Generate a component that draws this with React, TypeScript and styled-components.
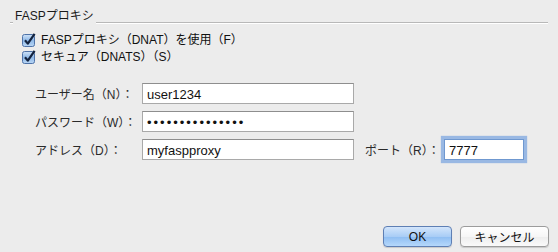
import React from 'react'
import styled, { createGlobalStyle } from 'styled-components'

const GlobalStyle = createGlobalStyle`
  html, body {
    margin: 0;
    padding: 0;
    background: #ececec;
  }
  body {
    font-family: "Liberation Sans", "Noto Sans CJK JP", sans-serif;
    font-size: 12px;
    color: #1a1a1a;
  }
`

const Dialog = styled.div`
  width: 558px;
  height: 252px;
  box-sizing: border-box;
  background: #ececec;
  display: flex;
  flex-direction: column;
  padding: 12px 9px 5px 10px;
`

const GroupHeader = styled.div`
  display: flex;
  align-items: flex-end;
  height: 12px;
  margin-right: 1px;
`

const Rule = styled.div<{ $grow?: boolean }>`
  flex: ${(p) => (p.$grow ? 1 : '0 0 3px')};
  height: 1px;
  background: #b8b8b8;
  border-bottom: 1px solid #fff;
`

const GroupTitle = styled.span`
  padding: 0 2px;
  line-height: 12px;
  font-size: 12px;
  transform: translateY(-2px);
`

const Checks = styled.div`
  display: flex;
  flex-direction: column;
  gap: 3px;
  padding: 9px 0 0 12px;
`

const CheckRow = styled.label`
  display: flex;
  align-items: center;
  gap: 5px;
  height: 14px;
  line-height: 14px;
  font-size: 12px;
  color: #111;
`

const Form = styled.div`
  display: grid;
  grid-template-columns: 107px 212px 90px 80px;
  grid-auto-rows: 21px;
  row-gap: 7px;
  align-items: center;
  padding: 19px 0 0 25px;
`

const FieldLabel = styled.span<{ $indent?: number }>`
  font-size: 12px;
  color: #2a2a2a;
  padding-left: ${(p) => p.$indent ?? 0}px;
  white-space: nowrap;
`

const TextField = styled.input<{ $focused?: boolean }>`
  box-sizing: border-box;
  width: 100%;
  height: 21px;
  margin: 0;
  padding: 1px 4px 0;
  border: 1px solid ${(p) => (p.$focused ? '#6f98d0' : '#a9a9a9')};
  border-top-color: ${(p) => (p.$focused ? '#6f98d0' : '#8e8e8e')};
  background: #fff;
  font-family: "Liberation Sans", "Noto Sans CJK JP", sans-serif;
  font-size: 13px;
  color: #111;
  outline: none;
  box-shadow: ${(p) => (p.$focused ? '0 0 1px 3px rgba(118, 163, 224, 0.7)' : 'none')};

  &[type='password'] {
    font-size: 13px;
    letter-spacing: 2px;
  }
`

const Spacer = styled.div`
  flex: 1;
`

const Buttons = styled.div`
  display: flex;
  justify-content: flex-end;
  gap: 8px;
`

const Button = styled.button<{ $primary?: boolean }>`
  height: 21px;
  width: ${(p) => (p.$primary ? '69px' : '89px')};
  margin: 0;
  padding: 0;
  border-radius: 4px;
  font-family: "Liberation Sans", "Noto Sans CJK JP", sans-serif;
  font-size: 12px;
  color: #111;
  border: 1px solid ${(p) => (p.$primary ? '#5e7fb4' : '#9c9c9c')};
  background: ${(p) =>
    p.$primary
      ? 'linear-gradient(to bottom, #d3e5fb 0%, #a9cdf6 50%, #8ebdf2 51%, #b5d8fb 100%)'
      : 'linear-gradient(to bottom, #ffffff 0%, #f6f6f6 50%, #ededed 51%, #fafafa 100%)'};
  box-shadow: 0 1px 1px rgba(0, 0, 0, 0.15);
`

const CheckBox = () => (
  <svg width="14" height="14" viewBox="0 0 14 14">
    <defs>
      <linearGradient id="cbg" x1="0" y1="0" x2="0" y2="1">
        <stop offset="0" stopColor="#cfe2f7" />
        <stop offset="0.5" stopColor="#8fb9e8" />
        <stop offset="1" stopColor="#b9d6f5" />
      </linearGradient>
    </defs>
    <rect x="0.5" y="1.5" width="12" height="12" rx="2" fill="url(#cbg)" stroke="#4f73a8" />
    <path d="M3 7.2 L5.8 10.6 L12.6 0.8" fill="none" stroke="#13233f" strokeWidth="2.2" strokeLinejoin="round" />
  </svg>
)

export default function App() {
  return (
    <>
      <GlobalStyle />
      <Dialog>
        <GroupHeader>
          <Rule />
          <GroupTitle>FASPプロキシ</GroupTitle>
          <Rule $grow />
        </GroupHeader>
        <Checks>
          <CheckRow>
            <CheckBox />
            FASPプロキシ（DNAT）を使用（F）
          </CheckRow>
          <CheckRow>
            <CheckBox />
            セキュア（DNATS）（S）
          </CheckRow>
        </Checks>
        <Form>
          <FieldLabel>ユーザー名（N）：</FieldLabel>
          <TextField defaultValue="user1234" />
          <span />
          <span />
          <FieldLabel>パスワード（W）：</FieldLabel>
          <TextField type="password" defaultValue="passwordpasswo1" />
          <span />
          <span />
          <FieldLabel>アドレス（D）：</FieldLabel>
          <TextField defaultValue="myfaspproxy" />
          <FieldLabel $indent={11}>ポート（R）：</FieldLabel>
          <TextField $focused defaultValue="7777" />
        </Form>
        <Spacer />
        <Buttons>
          <Button $primary>OK</Button>
          <Button>キャンセル</Button>
        </Buttons>
      </Dialog>
    </>
  )
}
